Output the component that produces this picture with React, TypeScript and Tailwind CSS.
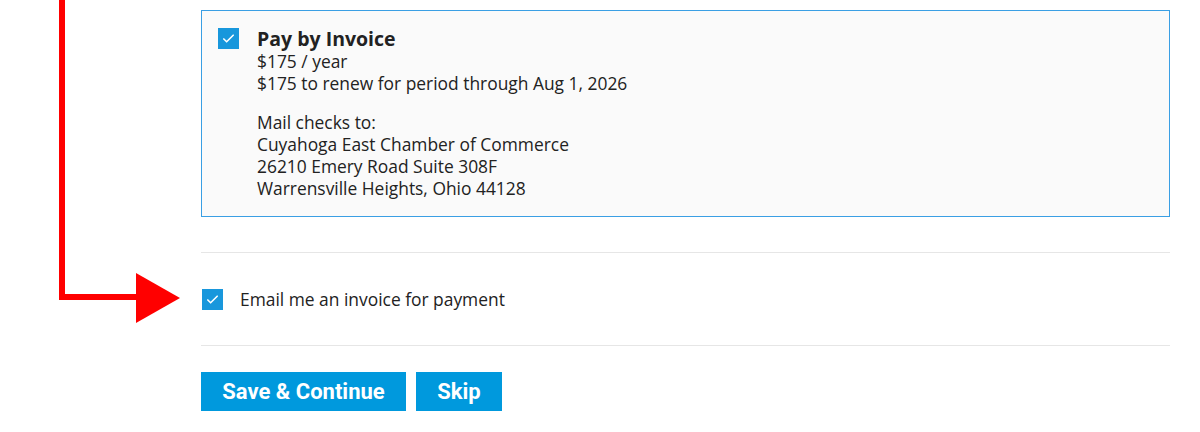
import React from 'react';

function CheckBox() {
  return (
    <span className="flex h-[21px] w-[21px] shrink-0 items-center justify-center bg-[#1897dc]">
      <svg viewBox="0 0 16 16" className="h-[15px] w-[15px]" fill="none" stroke="white" strokeWidth="1.7" strokeLinecap="round" strokeLinejoin="round">
        <path d="M3 8.5l3 3 7-7" />
      </svg>
    </span>
  );
}

export default function App() {
  return (
    <main className="relative min-h-[432px] w-[1200px] bg-white font-['Open_Sans',sans-serif] text-[#222]">
      <svg className="absolute left-0 top-0" width="200" height="432" viewBox="0 0 200 432">
        <path d="M62 0 V297 H140" fill="none" stroke="#ff0000" strokeWidth="6" />
        <polygon points="136,273 180,298 136,323" fill="#ff0000" />
      </svg>

      <div className="ml-[201px] w-[969px] pt-[10px]">
        <div className="flex gap-[18px] border border-[#3a9fe4] bg-[#fafafa] px-4 pb-[17px] pt-[17px]">
          <CheckBox />
          <div className="text-[17.4px] leading-[22px]">
            <div className="text-[19.5px] font-bold leading-[22px]">Pay by Invoice</div>
            <div>$175 / year</div>
            <div>$175 to renew for period through Aug 1, 2026</div>
            <div className="mt-[17px]">Mail checks to:</div>
            <div>Cuyahoga East Chamber of Commerce</div>
            <div>26210 Emery Road Suite 308F</div>
            <div>Warrensville Heights, Ohio 44128</div>
          </div>
        </div>

        <div className="mt-[35px] border-t border-[#e6e6e6]" />
        <label className="flex h-[92px] items-center gap-[17px] pl-px">
          <CheckBox />
          <span className="text-[17.4px]">Email me an invoice for payment</span>
        </label>
        <div className="border-t border-[#e6e6e6]" />

        <div className="mt-[26px] flex gap-[10px] font-['Roboto',sans-serif]">
          <button className="h-[39px] w-[205px] bg-[#0099dd] text-[22px] font-bold text-white">
            Save &amp; Continue
          </button>
          <button className="h-[39px] w-[86px] bg-[#0099dd] text-[22px] font-bold text-white">
            Skip
          </button>
        </div>
      </div>
    </main>
  );
}
